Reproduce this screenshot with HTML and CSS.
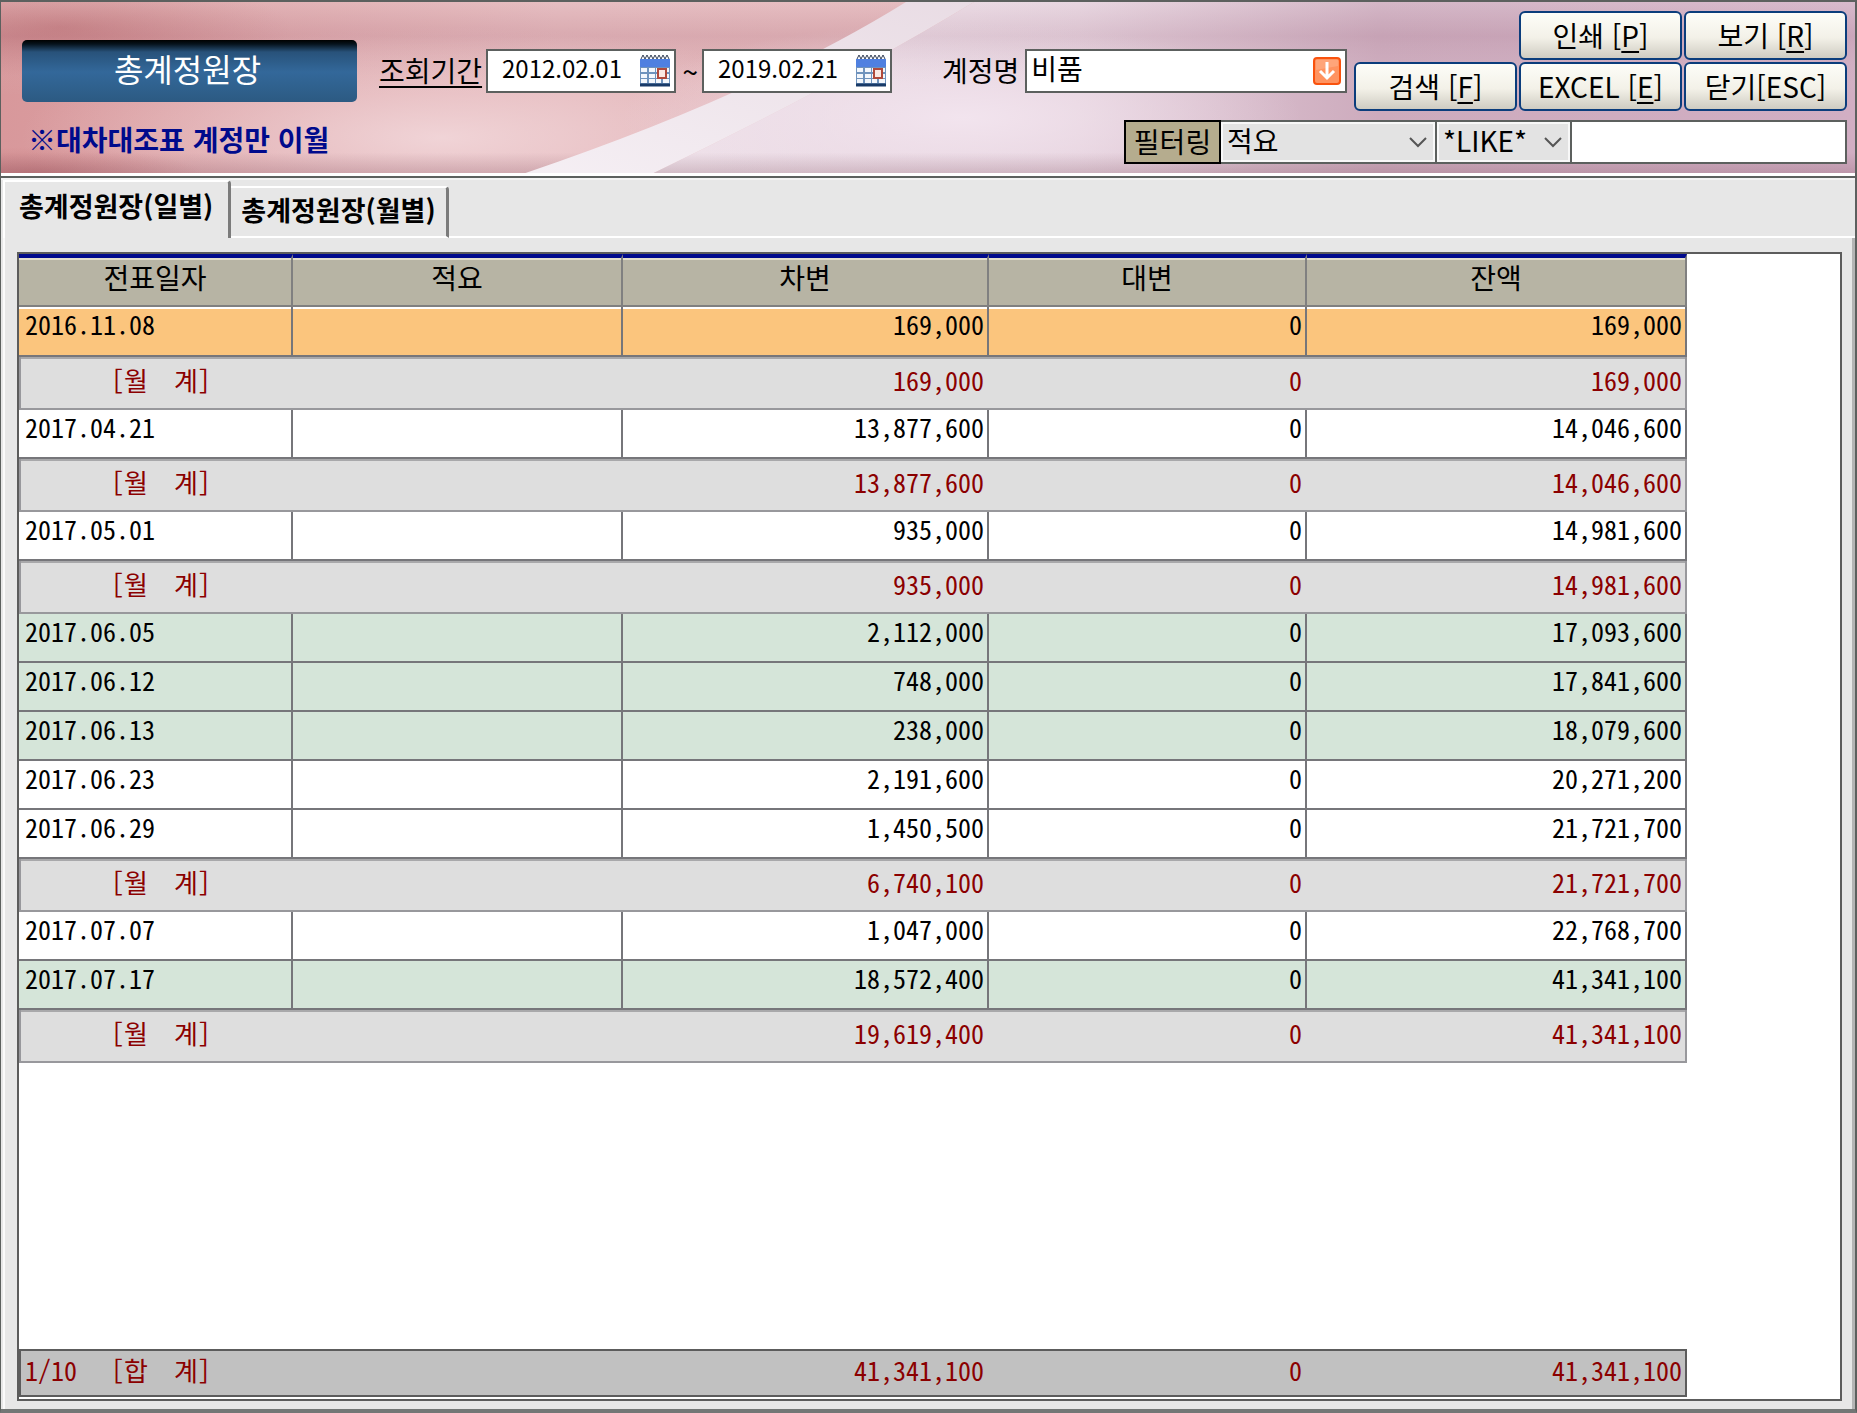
FILE: index.html
```html
<!DOCTYPE html>
<html lang="ko">
<head>
<meta charset="utf-8">
<title>총계정원장</title>
<link rel="stylesheet" href="styles.css">
</head>
<body>
<div class="window">
  <header class="banner">
    <svg class="banner-art" viewBox="0 0 1852 170" preserveAspectRatio="none" aria-hidden="true">
      <defs>
        <linearGradient id="pink" x1="0" y1="0" x2="1" y2="0">
          <stop offset="0" stop-color="#d8989b"/><stop offset=".3" stop-color="#e2b3b7"/><stop offset="1" stop-color="#dfaeb2"/>
        </linearGradient>
        <radialGradient id="glow" cx=".5" cy=".5" r=".5">
          <stop offset="0" stop-color="#f2d8db" stop-opacity=".9"/><stop offset="1" stop-color="#f0d2d5" stop-opacity="0"/>
        </radialGradient>
        <radialGradient id="corner" cx=".5" cy=".5" r=".5">
          <stop offset="0" stop-color="#bf7275" stop-opacity=".7"/><stop offset="1" stop-color="#c87f82" stop-opacity="0"/>
        </radialGradient>
        <linearGradient id="mauve" gradientUnits="userSpaceOnUse" x1="660" y1="0" x2="1852" y2="0">
          <stop offset="0" stop-color="#efe2ea"/><stop offset=".35" stop-color="#e4cfdb"/><stop offset=".6" stop-color="#cdabbd"/><stop offset="1" stop-color="#d1aec3"/>
        </linearGradient>
        <radialGradient id="lilac" cx=".5" cy=".5" r=".5">
          <stop offset="0" stop-color="#f2e4ee"/><stop offset="1" stop-color="#eedfe9" stop-opacity="0"/>
        </radialGradient>
        <linearGradient id="streak" x1="1" y1="0" x2="0" y2="1">
          <stop offset="0" stop-color="#e9dce4"/><stop offset="1" stop-color="#f5eff4"/>
        </linearGradient>
        <linearGradient id="shade" x1="0" y1="0" x2="0" y2="1">
          <stop offset="0" stop-color="#fff" stop-opacity=".15"/><stop offset=".2" stop-color="#a07085" stop-opacity=".14"/><stop offset=".55" stop-color="#fff" stop-opacity="0"/><stop offset=".88" stop-color="#805060" stop-opacity="0"/><stop offset="1" stop-color="#805060" stop-opacity=".25"/>
        </linearGradient>
      </defs>
      <rect width="1852" height="170" fill="url(#pink)"/>
      <ellipse cx="440" cy="135" rx="420" ry="110" fill="url(#glow)"/>
      <ellipse cx="60" cy="25" rx="230" ry="50" fill="url(#corner)"/>
      <ellipse cx="30" cy="170" rx="170" ry="26" fill="url(#corner)"/>
      <path d="M972 0Q830 85 652 170H1852V0Z" fill="url(#mauve)"/>
      <ellipse cx="960" cy="115" rx="340" ry="95" fill="url(#lilac)"/>
      <rect width="1852" height="170" fill="url(#shade)"/>
      <path d="M904 0Q755 92 524 170H652Q830 85 972 0Z" fill="url(#streak)"/>
    </svg>

    <div class="title-block">
      <h1 class="title">총계정원장</h1>
      <p class="note">※대차대조표 계정만 이월</p>
    </div>

    <div class="tools">
      <div class="query-row">
        <div class="fields">
          <label class="label underlined" for="from">조회기간</label>
          <div class="box date">
            <input id="from" class="date-text" type="text" value="2012.02.01">
            <svg class="calendar" viewBox="0 0 30 33" aria-hidden="true">
              <rect x="0" y="5" width="30" height="27" fill="#6f93bd"/>
              <rect x="0" y="5" width="30" height="8" fill="#4f80e0"/>
              <path d="M1 14h6v4H1zM9 14h6v4H9zM16 14h5v4h-5zM23 14h6v4h-6zM1 20h6v4H1zM9 20h6v4H9zM16 20h5v4h-5zM23 20h6v4h-6zM1 25h6v4H1zM9 25h6v4H9zM16 25h5v4h-5zM23 25h6v4h-6z" fill="#f3f7fc"/>
              <path d="M18 15h8v9h-8z" fill="#fbe9e4" stroke="#b04a3c" stroke-width="2"/>
              <path d="M0 31h30" stroke="#183a68" stroke-width="3"/>
              <path d="M1 5l2-4 2 4 2-4 2 4 2-4 2 4 2-4 2 4 2-4 2 4 2-4 2 4 2-4 2 4" fill="none" stroke="#333f55" stroke-width="1"/>
            </svg>
          </div>
          <span class="tilde">~</span>
          <div class="box date">
            <input class="date-text" type="text" value="2019.02.21" aria-label="종료일">
            <svg class="calendar" viewBox="0 0 30 33" aria-hidden="true">
              <rect x="0" y="5" width="30" height="27" fill="#6f93bd"/>
              <rect x="0" y="5" width="30" height="8" fill="#4f80e0"/>
              <path d="M1 14h6v4H1zM9 14h6v4H9zM16 14h5v4h-5zM23 14h6v4h-6zM1 20h6v4H1zM9 20h6v4H9zM16 20h5v4h-5zM23 20h6v4h-6zM1 25h6v4H1zM9 25h6v4H9zM16 25h5v4h-5zM23 25h6v4h-6z" fill="#f3f7fc"/>
              <path d="M18 15h8v9h-8z" fill="#fbe9e4" stroke="#b04a3c" stroke-width="2"/>
              <path d="M0 31h30" stroke="#183a68" stroke-width="3"/>
              <path d="M1 5l2-4 2 4 2-4 2 4 2-4 2 4 2-4 2 4 2-4 2 4 2-4 2 4 2-4 2 4" fill="none" stroke="#333f55" stroke-width="1"/>
            </svg>
          </div>
          <label class="label account-label" for="account">계정명</label>
          <div class="box account">
            <input id="account" class="account-text" type="text" value="비품">
            <button class="drop" type="button" aria-label="계정 선택">
              <svg viewBox="0 0 28 28" aria-hidden="true">
                <rect x="1" y="1" width="26" height="26" rx="3" fill="#ff9360" stroke="#f9520d" stroke-width="2"/>
                <path d="M3 13V3h22v6z" fill="#ffb08a" opacity=".6"/>
                <path d="M14 5v16M7 14l7 7 7-7" fill="none" stroke="#fff" stroke-width="3"/>
              </svg>
            </button>
          </div>
        </div>
        <div class="buttons">
          <button class="btn print" type="button">인쇄 [<u>P</u>]</button>
          <button class="btn" type="button">보기 [<u>R</u>]</button>
          <button class="btn" type="button">검색 [<u>F</u>]</button>
          <button class="btn" type="button">EXCEL [<u>E</u>]</button>
          <button class="btn" type="button">닫기[ESC]</button>
        </div>
      </div>
      <div class="filter">
        <label class="filter-label" for="column">필터링</label>
        <div class="pick pick-column">
          <select id="column"><option>적요</option></select>
          <svg class="chevron" viewBox="0 0 18 12" aria-hidden="true"><path d="M1 2l8 8 8-8" fill="none" stroke="#555" stroke-width="2"/></svg>
        </div>
        <div class="pick pick-op">
          <select aria-label="조건"><option>*LIKE*</option></select>
          <svg class="chevron" viewBox="0 0 18 12" aria-hidden="true"><path d="M1 2l8 8 8-8" fill="none" stroke="#555" stroke-width="2"/></svg>
        </div>
        <input class="filter-text" type="text" aria-label="필터 값">
      </div>
    </div>
  </header>

  <nav class="tabs">
    <button class="tab active" type="button">총계정원장(일별)</button>
    <button class="tab" type="button">총계정원장(월별)</button>
    <div class="tab-rest"></div>
  </nav>

  <main class="page">
    <div class="grid">
      <table class="ledger">
        <colgroup><col class="c-date"><col class="c-memo"><col class="c-debit"><col class="c-credit"><col class="c-balance"></colgroup>
        <thead>
          <tr><th>전표일자</th><th>적요</th><th>차변</th><th>대변</th><th>잔액</th></tr>
        </thead>
        <tbody>
          <tr class="selected"><td>2016.11.08</td><td></td><td>169,000</td><td>0</td><td>169,000</td></tr>
          <tr class="sub"><td>[월&nbsp; 계]</td><td></td><td>169,000</td><td>0</td><td>169,000</td></tr>
          <tr><td>2017.04.21</td><td></td><td>13,877,600</td><td>0</td><td>14,046,600</td></tr>
          <tr class="sub"><td>[월&nbsp; 계]</td><td></td><td>13,877,600</td><td>0</td><td>14,046,600</td></tr>
          <tr><td>2017.05.01</td><td></td><td>935,000</td><td>0</td><td>14,981,600</td></tr>
          <tr class="sub"><td>[월&nbsp; 계]</td><td></td><td>935,000</td><td>0</td><td>14,981,600</td></tr>
          <tr class="green"><td>2017.06.05</td><td></td><td>2,112,000</td><td>0</td><td>17,093,600</td></tr>
          <tr class="green"><td>2017.06.12</td><td></td><td>748,000</td><td>0</td><td>17,841,600</td></tr>
          <tr class="green"><td>2017.06.13</td><td></td><td>238,000</td><td>0</td><td>18,079,600</td></tr>
          <tr><td>2017.06.23</td><td></td><td>2,191,600</td><td>0</td><td>20,271,200</td></tr>
          <tr><td>2017.06.29</td><td></td><td>1,450,500</td><td>0</td><td>21,721,700</td></tr>
          <tr class="sub"><td>[월&nbsp; 계]</td><td></td><td>6,740,100</td><td>0</td><td>21,721,700</td></tr>
          <tr><td>2017.07.07</td><td></td><td>1,047,000</td><td>0</td><td>22,768,700</td></tr>
          <tr class="green"><td>2017.07.17</td><td></td><td>18,572,400</td><td>0</td><td>41,341,100</td></tr>
          <tr class="sub"><td>[월&nbsp; 계]</td><td></td><td>19,619,400</td><td>0</td><td>41,341,100</td></tr>
        </tbody>
      </table>
      <table class="ledger total">
        <colgroup><col class="c-date"><col class="c-memo"><col class="c-debit"><col class="c-credit"><col class="c-balance"></colgroup>
        <tbody>
          <tr><td><span class="count">1/10</span>[합&nbsp; 계]</td><td></td><td>41,341,100</td><td>0</td><td>41,341,100</td></tr>
        </tbody>
      </table>
    </div>
  </main>
</div>
</body>
</html>
```

FILE: styles.css
```css
* { box-sizing: border-box; }

body {
  margin: 0;
  background: #e7e7e7;
  color: #000;
  font: 28px/34px "Noto Sans CJK KR", sans-serif;
}

input, select, button { font: inherit; color: inherit; margin: 0; border-radius: 0; }
input { border: 0; padding: 0; background: transparent; min-width: 0; outline: 0; }

.window {
  min-height: 100vh;
  display: flex;
  flex-direction: column;
  border: 2px solid #5c605e;
  border-width: 2px 2px 4px 1px;
  border-bottom-color: #737675;
}

/* Banner */
.banner {
  position: relative;
  display: flex;
  padding: 9px 8px 12px 21px;
  border-bottom: 2px solid #5c605e;
  box-shadow: inset 0 -3px #fff;
}
.banner-art {
  position: absolute;
  inset: 0 0 3px;
  width: 100%;
  height: calc(100% - 3px);
}
.title-block, .tools { position: relative; }
.title-block { flex: none; width: 335px; padding-top: 29px; }
.title {
  margin: 0;
  height: 62px;
  padding-right: 4px;
  border-radius: 5px;
  background: linear-gradient(#000 0, #06121c 4px, #28527a 12px, #33689a 32px, #2c5a82 100%);
  color: #fff;
  font-size: 32px;
  font-weight: 400;
  line-height: 56px;
  text-align: center;
}
.note {
  margin: 20px 0 0 6px;
  color: #000a8c;
  font-weight: 700;
  white-space: nowrap;
}

.tools { flex: 1; min-width: 0; padding-left: 22px; }
.query-row { display: flex; gap: 7px; }
.fields { flex: 1; min-width: 0; display: flex; align-items: center; height: 44px; margin-top: 38px; }
.label { white-space: nowrap; line-height: 38px; height: 40px; }
.underlined { text-decoration: underline; text-underline-offset: 4px; }
.box {
  display: flex;
  height: 44px;
  border: 2px solid #5c605e;
  background: #fff;
}
.date { flex: none; width: 190px; margin-left: 4px; padding: 0 4px 0 14px; justify-content: space-between; align-items: flex-start; }
.date-text { width: 126px; height: 34px; font-size: 24px; }
.calendar { width: 30px; height: 33px; margin-top: 3px; }
.tilde { width: 22px; text-align: right; }
.account-label { margin-left: 50px; }
.account { flex: 1; min-width: 0; margin-left: 6px; padding: 0 4px; align-items: center; }
.account-text { flex: 1; height: 40px; padding-bottom: 6px; }
.drop { width: 28px; height: 28px; padding: 0; border: 0; background: none; }
.drop svg { display: block; width: 28px; height: 28px; }

.buttons { flex: none; display: grid; grid-template-columns: repeat(3, 163px); grid-auto-rows: 49px; gap: 2px; }
.print { grid-column: 2; }
.btn {
  padding: 0 0 2px;
  border: 2px solid #0b3d7c;
  border-radius: 6px;
  background: linear-gradient(#fdfdf8 0, #f3f1e8 55%, #cfccc2 100%);
  white-space: nowrap;
}
.btn u { text-underline-offset: 4px; }

.filter { display: flex; justify-content: flex-end; height: 44px; margin-top: 9px; }
.filter-label { width: 97px; border: 2px solid #000; background: #b5ac8e; text-align: center; line-height: 38px; }
.pick { display: grid; align-items: center; border: 2px solid #5c605e; border-left: 0; background: #e3e3e3; box-shadow: inset 0 0 0 2px #f8f8f8; }
.pick select {
  grid-area: 1 / 1;
  width: 100%;
  height: 38px;
  padding: 0 0 4px 6px;
  border: 0;
  background: transparent;
  appearance: none;
}
.pick-column { width: 216px; }
.pick-op { width: 135px; }
.chevron { grid-area: 1 / 1; justify-self: end; width: 18px; height: 12px; margin-right: 8px; pointer-events: none; }
.filter-text { width: 275px; border: 2px solid #5c605e; border-left: 0; background: #fff; }

/* Tabs */
.tabs { display: flex; align-items: flex-end; height: 60px; padding-left: 2px; border-top: 2px solid #f3f3f3; }
.tab {
  height: 52px;
  padding: 0 10px 4px;
  border: 0;
  border-right: 3px solid #7b7b7b;
  border-top: 2px solid #fff;
  border-bottom: 2px solid #fff;
  border-radius: 0 4px 0 0;
  background: transparent;
  font-size: 27px;
  font-weight: 700;
  white-space: nowrap;
}
.tab.active { height: 58px; padding: 0 15px 8px 14px; border-bottom: 0; border-left: 2px solid #fff; }
.tab-rest { flex: 1; border-bottom: 2px solid #fff; }

/* Ledger */
.page {
  flex: 1;
  display: flex;
  margin-left: 2px;
  padding: 14px 10px 8px 12px;
  border-left: 2px solid #fafafa;
  border-right: 3px solid #b5b5b5;
}
.grid {
  flex: 1;
  min-width: 0;
  display: flex;
  flex-direction: column;
  justify-content: space-between;
  padding-bottom: 2px;
  border: 2px solid #5c5c5c;
  background: #fff;
}
.ledger {
  width: 1668px;
  table-layout: fixed;
  border-collapse: separate;
  border-spacing: 0;
  font: 26px/34px "Noto Sans Mono CJK KR", "Noto Sans CJK KR", monospace;
}
.c-date { width: 274px; }
.c-memo { width: 330px; }
.c-debit { width: 366px; }
.c-credit { width: 318px; }
.c-balance { width: 380px; }
.ledger th {
  height: 53px;
  padding: 0 0 10px;
  border-top: 4px solid #000a8c;
  border-right: 2px solid #808080;
  border-bottom: 2px solid #808080;
  background: #b7b4a4;
  box-shadow: inset 0 2px #e3decb;
  font-size: 28px;
  font-weight: 400;
}
.ledger td {
  height: 49px;
  padding: 0 3px 0 0;
  border-right: 2px solid #76767a;
  border-bottom: 2px solid #76767a;
  text-align: right;
  vertical-align: top;
  white-space: nowrap;
}
.ledger td:first-child { padding-left: 6px; text-align: left; }
.ledger .selected td { height: 50px; background: #fbc57d; box-shadow: inset 0 2px #fff; }
.ledger .green td { background: #d5e5d9; }
.ledger .sub td {
  height: 53px;
  padding-top: 6px;
  padding-right: 5px;
  border-right: 0;
  border-bottom-color: #98989c;
  background: #dedede;
  box-shadow: inset 0 2px #a8a8aa;
  color: #8b0000;
}
.ledger .sub td:first-child { padding-left: 90px; border-left: 2px solid #98989c; }
.ledger .sub td:last-child { padding-right: 3px; border-right: 2px solid #98989c; }

.total { color: #8b0000; }
.ledger.total td {
  height: 48px;
  padding-top: 2px;
  padding-right: 5px;
  border-top: 2px solid #5c5c5c;
  border-right: 0;
  border-bottom-color: #5c5c5c;
  background: #c1c1c1;
}
.ledger.total td:first-child { padding-left: 4px; border-left: 2px solid #5c5c5c; }
.ledger.total td:last-child { padding-right: 3px; border-right: 2px solid #5c5c5c; }
.count { display: inline-block; width: 86px; }
```
